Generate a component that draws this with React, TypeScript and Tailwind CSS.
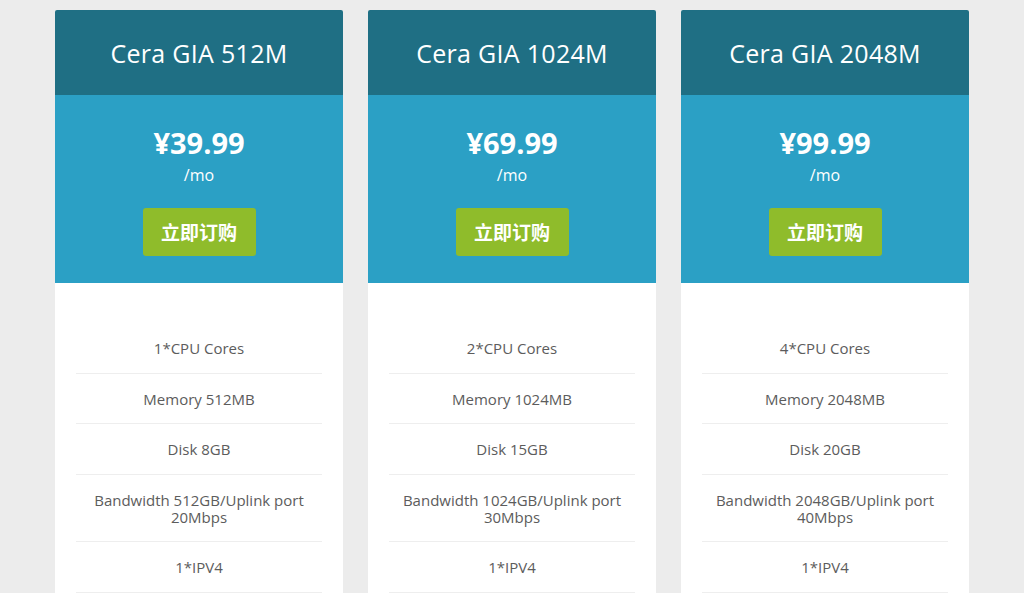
import React from 'react';

type Plan = {
  name: string;
  price: string;
  features: string[];
};

const plans: Plan[] = [
  {
    name: 'Cera GIA 512M',
    price: '¥39.99',
    features: ['1*CPU Cores', 'Memory 512MB', 'Disk 8GB', 'Bandwidth 512GB/Uplink port 20Mbps', '1*IPV4'],
  },
  {
    name: 'Cera GIA 1024M',
    price: '¥69.99',
    features: ['2*CPU Cores', 'Memory 1024MB', 'Disk 15GB', 'Bandwidth 1024GB/Uplink port 30Mbps', '1*IPV4'],
  },
  {
    name: 'Cera GIA 2048M',
    price: '¥99.99',
    features: ['4*CPU Cores', 'Memory 2048MB', 'Disk 20GB', 'Bandwidth 2048GB/Uplink port 40Mbps', '1*IPV4'],
  },
];

const PlanCard: React.FC<{ plan: Plan }> = ({ plan }) => (
  <div className="w-[288px] bg-white rounded-t-[2px] overflow-hidden">
    <div className="h-[85px] bg-[#1f6f84] flex items-center justify-center pt-[3px]">
      <h3 className="text-white text-[25px] font-normal tracking-[0.3px]">{plan.name}</h3>
    </div>
    <div className="h-[188px] bg-[#2ba0c5] flex flex-col items-center pt-[29px]">
      <div className="text-white text-[29px] font-bold leading-[38px]">{plan.price}</div>
      <div className="text-white text-[16px] leading-[22px] mt-[2px]">/mo</div>
      <button className="mt-[22px] w-[113px] h-[48px] rounded-[3px] bg-[#8fbc2b] text-white text-[19px] font-bold font-['Noto_Sans_CJK_SC',sans-serif]">
        立即订购
      </button>
    </div>
    <ul className="pt-[40px] px-[21px]">
      {plan.features.map((f) => (
        <li
          key={f}
          className="pt-[17px] pb-[15.5px] leading-[17px] text-[15px] text-[#5c5c5c] text-center border-b border-[#eeeeee]"
        >
          {f}
        </li>
      ))}
    </ul>
  </div>
);

export default function App() {
  return (
    <div className="h-[593px] overflow-hidden bg-[#ececec] font-['Open_Sans','Noto_Sans_CJK_SC',sans-serif]">
      <div className="flex justify-center gap-[25px] pt-[10px]">
        {plans.map((p) => (
          <PlanCard key={p.name} plan={p} />
        ))}
      </div>
    </div>
  );
}
